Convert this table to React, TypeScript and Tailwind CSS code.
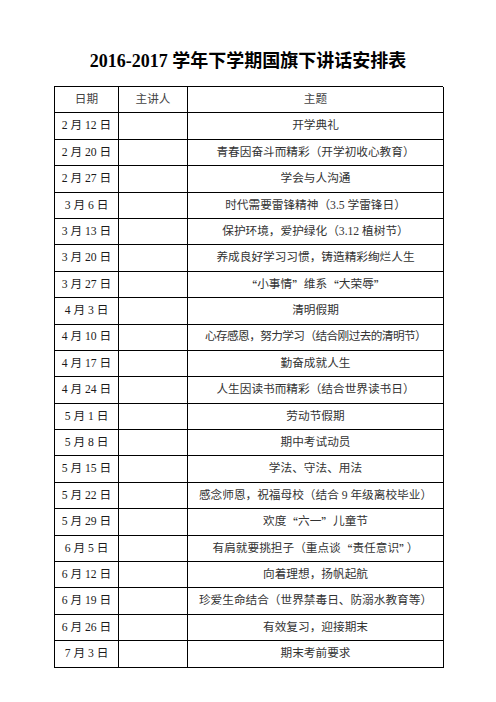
const rows: [string, string][] = [
  ['2 月 12 日', '开学典礼'],
  ['2 月 20 日', '青春因奋斗而精彩（开学初收心教育）'],
  ['2 月 27 日', '学会与人沟通'],
  ['3 月 6 日', '时代需要雷锋精神（3.5 学雷锋日）'],
  ['3 月 13 日', '保护环境，爱护绿化（3.12 植树节）'],
  ['3 月 20 日', '养成良好学习习惯，铸造精彩绚烂人生'],
  ['3 月 27 日', '“小事情”维系“大荣辱”'],
  ['4 月 3 日', '清明假期'],
  ['4 月 10 日', '心存感恩，努力学习（结合刚过去的清明节）'],
  ['4 月 17 日', '勤奋成就人生'],
  ['4 月 24 日', '人生因读书而精彩（结合世界读书日）'],
  ['5 月 1 日', '劳动节假期'],
  ['5 月 8 日', '期中考试动员'],
  ['5 月 15 日', '学法、守法、用法'],
  ['5 月 22 日', '感念师恩，祝福母校（结合 9 年级离校毕业）'],
  ['5 月 29 日', '欢度“六一”儿童节'],
  ['6 月 5 日', '有肩就要挑担子（重点谈“责任意识”）'],
  ['6 月 12 日', '向着理想，扬帆起航'],
  ['6 月 19 日', '珍爱生命结合（世界禁毒日、防溺水教育等）'],
  ['6 月 26 日', '有效复习，迎接期末'],
  ['7 月 3 日', '期末考前要求'],
]

// curly quotes should take a full CJK cell, like the Song font in the original
function Topic({ text }: { text: string }) {
  const parts = text.split(/([“”])/)
  return (
    <>
      {parts.map((p, i) => {
        if (p !== '“' && p !== '”') return p
        // ” right before ） is squeezed together in the original
        const squeeze = p === '”' && (parts[i + 1] ?? '').startsWith('）')
        return (
          <span
            key={i}
            className={
              squeeze
                ? "font-['Noto_Sans_CJK_SC',sans-serif] [font-feature-settings:'fwid'] tracking-[-4px]"
                : "font-['Noto_Sans_CJK_SC',sans-serif] [font-feature-settings:'fwid']"
            }
          >
            {p}
          </span>
        )
      })}
    </>
  )
}

export default function App() {
  return (
    <div
      lang="zh-CN"
      className="w-[496px] h-[702px] bg-white text-[#1a1a1a] font-['Liberation_Serif','Noto_Sans_CJK_SC',serif]"
    >
      {/* Title */}
      <h1 className="pt-[49px] h-[73px] text-center text-[18px] leading-[24px] font-bold text-black">
        2016-2017 学年下学期国旗下讲话安排表
      </h1>

      {/* Schedule table */}
      <div className="ml-[54px] mt-[13px] w-[389px] grid grid-cols-[64px_69px_256px] border-l border-t border-black text-[11.67px]">
        <div className="h-[26.4px] flex items-center justify-center border-r border-b border-black text-[#444]">日期</div>
        <div className="h-[26.4px] flex items-center justify-center border-r border-b border-black text-[#444]">主讲人</div>
        <div className="h-[26.4px] flex items-center justify-center border-r border-b border-black text-[#444]">主题</div>
        {rows.map(([date, topic]) => (
          <div key={date} className="contents">
            <div className="h-[26.4px] flex items-center justify-center border-r border-b border-black whitespace-pre">
              {date}
            </div>
            <div className="h-[26.4px] border-r border-b border-black" />
            <div
              className={
                topic.startsWith('心存')
                  ? 'h-[26.4px] flex items-center justify-center border-r border-b border-black text-[#333] whitespace-pre tracking-[-0.6px]'
                  : 'h-[26.4px] flex items-center justify-center border-r border-b border-black text-[#333] whitespace-pre'
              }
            >
              <Topic text={topic} />
            </div>
          </div>
        ))}
      </div>
    </div>
  )
}
